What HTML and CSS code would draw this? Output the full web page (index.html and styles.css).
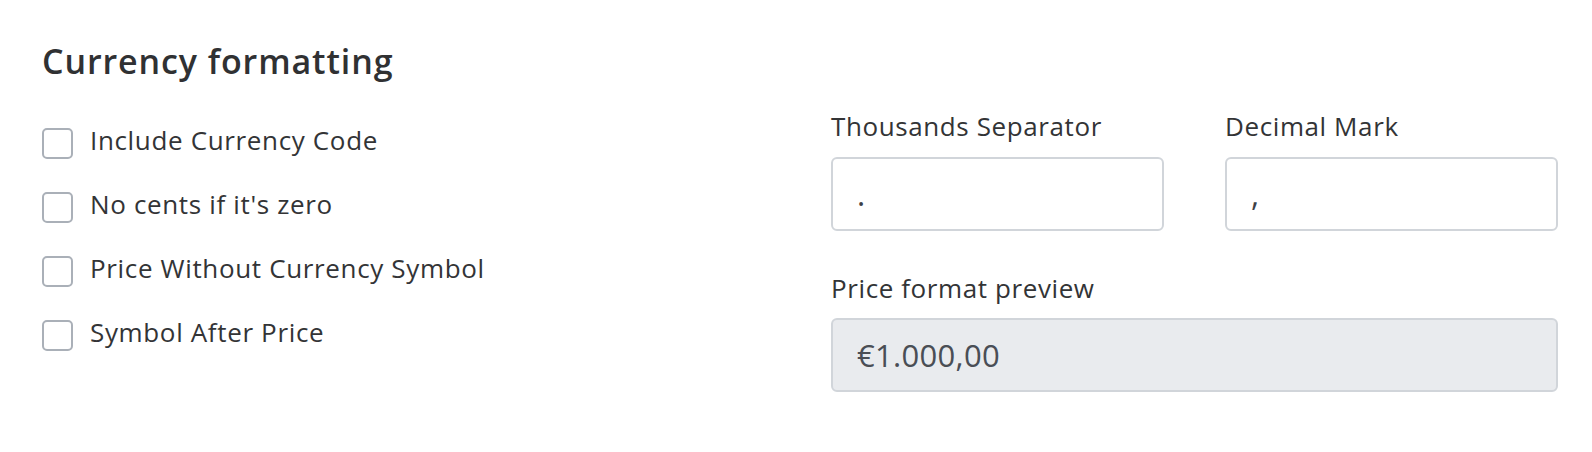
FILE: index.html
```html
<!DOCTYPE html>
<html lang="en">
<head>
<meta charset="utf-8">
<title>Currency formatting</title>
<link rel="stylesheet" href="styles.css">
</head>
<body>
<section class="page">
  <h1 class="title">Currency formatting</h1>
  <div class="content">
    <div class="options">
      <label class="option"><input type="checkbox" class="check"><span class="option-text">Include Currency Code</span></label>
      <label class="option"><input type="checkbox" class="check"><span class="option-text">No cents if it's zero</span></label>
      <label class="option"><input type="checkbox" class="check"><span class="option-text">Price Without Currency Symbol</span></label>
      <label class="option"><input type="checkbox" class="check"><span class="option-text">Symbol After Price</span></label>
    </div>
    <div class="fields">
      <div class="field-row">
        <div class="field">
          <label class="field-label">Thousands Separator</label>
          <input class="text-input" type="text" value=".">
        </div>
        <div class="field">
          <label class="field-label">Decimal Mark</label>
          <input class="text-input" type="text" value=",">
        </div>
      </div>
      <div class="field preview-field">
        <label class="field-label">Price format preview</label>
        <div class="preview">€1.000,00</div>
      </div>
    </div>
  </div>
</section>
</body>
</html>
```
FILE: styles.css
```css
* { box-sizing: border-box; }

html, body {
  margin: 0;
  padding: 0;
  background: #ffffff;
}

body {
  font-family: "Open Sans", Lato, "Liberation Sans", sans-serif;
  color: #333436;
}

.page {
  padding: 41px 34px 0 42px;
}

.title {
  margin: 0;
  font-size: 34px;
  line-height: 40px;
  font-weight: 600;
  letter-spacing: 0.9px;
  color: #303133;
}

.content {
  margin-top: 29px;
  display: grid;
  grid-template-columns: 1fr 727px;
}

.options {
  padding-top: 18px;
  display: flex;
  flex-direction: column;
  gap: 33px;
}

.option {
  display: flex;
  align-items: flex-start;
  gap: 17px;
  height: 31px;
  cursor: pointer;
}

.check {
  appearance: none;
  -webkit-appearance: none;
  margin: 0;
  width: 31px;
  height: 31px;
  flex: 0 0 31px;
  border: 2px solid #aab0b8;
  border-radius: 5px;
  background: #ffffff;
}

.option-text {
  font-size: 26px;
  line-height: 24px;
  letter-spacing: 0.65px;
  color: #333436;
}

.fields {
  display: flex;
  flex-direction: column;
}

.field-row {
  display: grid;
  grid-template-columns: 1fr 1fr;
  column-gap: 61px;
}

.field {
  display: flex;
  flex-direction: column;
  gap: 15px;
}

.preview-field {
  margin-top: 41px;
  gap: 14px;
}

.field-label {
  font-size: 26px;
  line-height: 32px;
  letter-spacing: 0.6px;
  color: #333436;
}

.text-input {
  width: 100%;
  height: 74px;
  margin: 0;
  padding: 0 24px;
  border: 2px solid #d1d5da;
  border-radius: 6px;
  background: #ffffff;
  font-family: "Open Sans", Lato, "Liberation Sans", sans-serif;
  font-size: 31px;
  color: #3d4147;
  outline: none;
}

.preview {
  height: 74px;
  display: flex;
  align-items: center;
  padding: 0 24px;
  border: 2px solid #d1d5da;
  border-radius: 6px;
  background: #e9ebee;
  font-size: 31px;
  letter-spacing: 0.3px;
  color: #4a4e55;
}
```
